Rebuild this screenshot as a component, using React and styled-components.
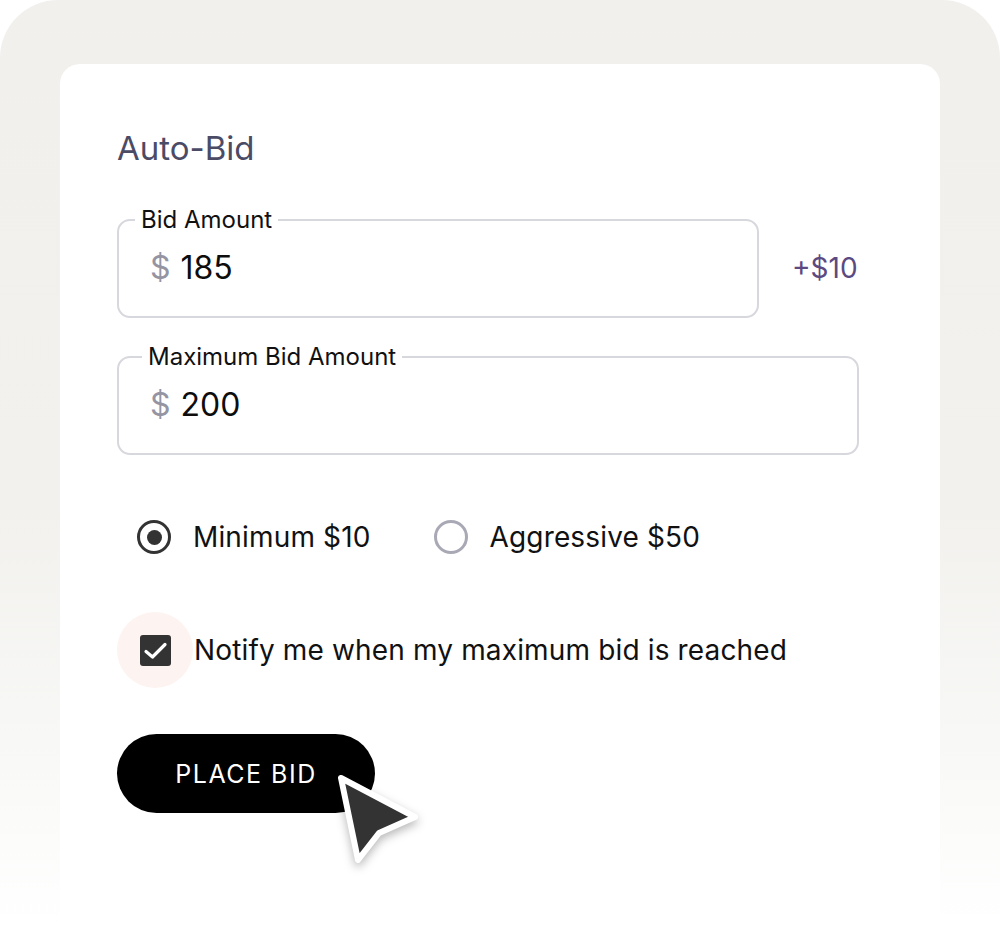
import styled, { createGlobalStyle } from "styled-components";

const GlobalStyle = createGlobalStyle`
  body {
    margin: 0;
    background: #ffffff;
    font-family: Inter, "Noto Sans", "Liberation Sans", sans-serif;
  }
`;

const Frame = styled.div`
  box-sizing: border-box;
  width: 1000px;
  height: 926px;
  padding: 64px 60px 0;
  display: flex;
  border-radius: 58px 58px 0 0;
  background: linear-gradient(#f1f0ed 0%, #f2f1ee 55%, #f8f8f6 80%, #ffffff 100%);
`;

const Card = styled.section`
  flex: 1;
  box-sizing: border-box;
  padding: 64px 57px 0;
  background: #ffffff;
  border-radius: 20px 20px 0 0;
`;

const Title = styled.h2`
  margin: 0 0 38px;
  font-size: 33px;
  line-height: 40px;
  font-weight: 400;
  color: #4b4b66;
`;

const FieldRow = styled.div`
  display: flex;
  align-items: center;
  gap: 33px;
  margin-bottom: ${(p) => p.$gap || 0}px;
`;

const Field = styled.fieldset`
  box-sizing: border-box;
  width: ${(p) => p.$width}px;
  margin: 0;
  padding: 13px 28px 29px 31px;
  border: 2px solid #d7d7de;
  border-radius: 13px;
`;

const Legend = styled.legend`
  margin-left: ${(p) => p.$inset}px;
  padding: 0 6px;
  font-size: 24px;
  line-height: 28px;
  color: #111111;
`;

const Value = styled.div`
  display: flex;
  align-items: center;
  gap: 10px;
  height: 40px;
  font-size: 32px;
  color: #0d0d0d;
`;

const Currency = styled.span`
  color: #9494a2;
`;

const Step = styled.span`
  margin-top: 12px;
  font-size: 28px;
  color: #5b4a82;
`;

const RadioGroup = styled.div`
  display: flex;
  align-items: center;
  gap: 42px;
  margin: 44px 0 37px -1px;
`;

const Option = styled.label`
  display: flex;
  align-items: center;
  gap: 1px;
  font-size: 28px;
  letter-spacing: 0.15px;
  color: #111111;
`;

const Control = styled.span`
  width: 76px;
  height: 76px;
  flex: none;
  display: flex;
  align-items: center;
  justify-content: center;
  border-radius: 50%;
  background: ${(p) => (p.$halo ? "#fdf3f1" : "transparent")};
`;

const RadioRing = styled.span`
  box-sizing: border-box;
  width: 34px;
  height: 34px;
  display: flex;
  align-items: center;
  justify-content: center;
  border-radius: 50%;
  border: 3px solid ${(p) => (p.$checked ? "#333333" : "#a9a9b6")};

  &::after {
    content: "";
    width: 15px;
    height: 15px;
    border-radius: 50%;
    background: ${(p) => (p.$checked ? "#333333" : "transparent")};
  }
`;

const CheckBox = styled.span`
  width: 31px;
  height: 31px;
  display: flex;
  border-radius: 3px;
  background: #333333;
`;

const ButtonWrap = styled.div`
  position: relative;
  width: 258px;
  margin-top: 46px;
`;

const PlaceBid = styled.button`
  width: 258px;
  height: 79px;
  border: none;
  border-radius: 40px;
  background: #000000;
  color: #ffffff;
  font-family: inherit;
  font-size: 25px;
  font-weight: 400;
  letter-spacing: 1.5px;
  cursor: pointer;
`;

const Pointer = styled.svg`
  position: absolute;
  left: 209px;
  top: 31px;
  filter: drop-shadow(0 4px 5px rgba(0, 0, 0, 0.28));
`;

const Radio = ({ checked, children }) => (
  <Option>
    <Control>
      <RadioRing $checked={checked} />
    </Control>
    {children}
  </Option>
);

export default function App() {
  return (
    <>
      <GlobalStyle />
      <Frame>
        <Card>
          <Title>Auto-Bid</Title>

          <FieldRow $gap={25}>
            <Field $width={642}>
              <Legend $inset={-15}>Bid Amount</Legend>
              <Value>
                <Currency>$</Currency>185
              </Value>
            </Field>
            <Step>+$10</Step>
          </FieldRow>

          <FieldRow>
            <Field $width={742}>
              <Legend $inset={-8}>Maximum Bid Amount</Legend>
              <Value>
                <Currency>$</Currency>200
              </Value>
            </Field>
          </FieldRow>

          <RadioGroup>
            <Radio checked>Minimum $10</Radio>
            <Radio>Aggressive $50</Radio>
          </RadioGroup>

          <Option>
            <Control $halo>
              <CheckBox>
                <svg width="31" height="31" viewBox="0 0 31 31">
                  <path
                    d="M6 16.5l6.5 5.5L25 9.5"
                    fill="none"
                    stroke="#ffffff"
                    strokeWidth="3.2"
                    strokeLinecap="round"
                    strokeLinejoin="round"
                  />
                </svg>
              </CheckBox>
            </Control>
            Notify me when my maximum bid is reached
          </Option>

          <ButtonWrap>
            <PlaceBid>PLACE BID</PlaceBid>
            <Pointer width="105" height="110" viewBox="0 0 105 110">
              <path
                d="M15 13 L89 52 L53 68 L32 95 Z"
                fill="#333333"
                stroke="#ffffff"
                strokeWidth="6"
                strokeLinejoin="round"
              />
            </Pointer>
          </ButtonWrap>
        </Card>
      </Frame>
    </>
  );
}
